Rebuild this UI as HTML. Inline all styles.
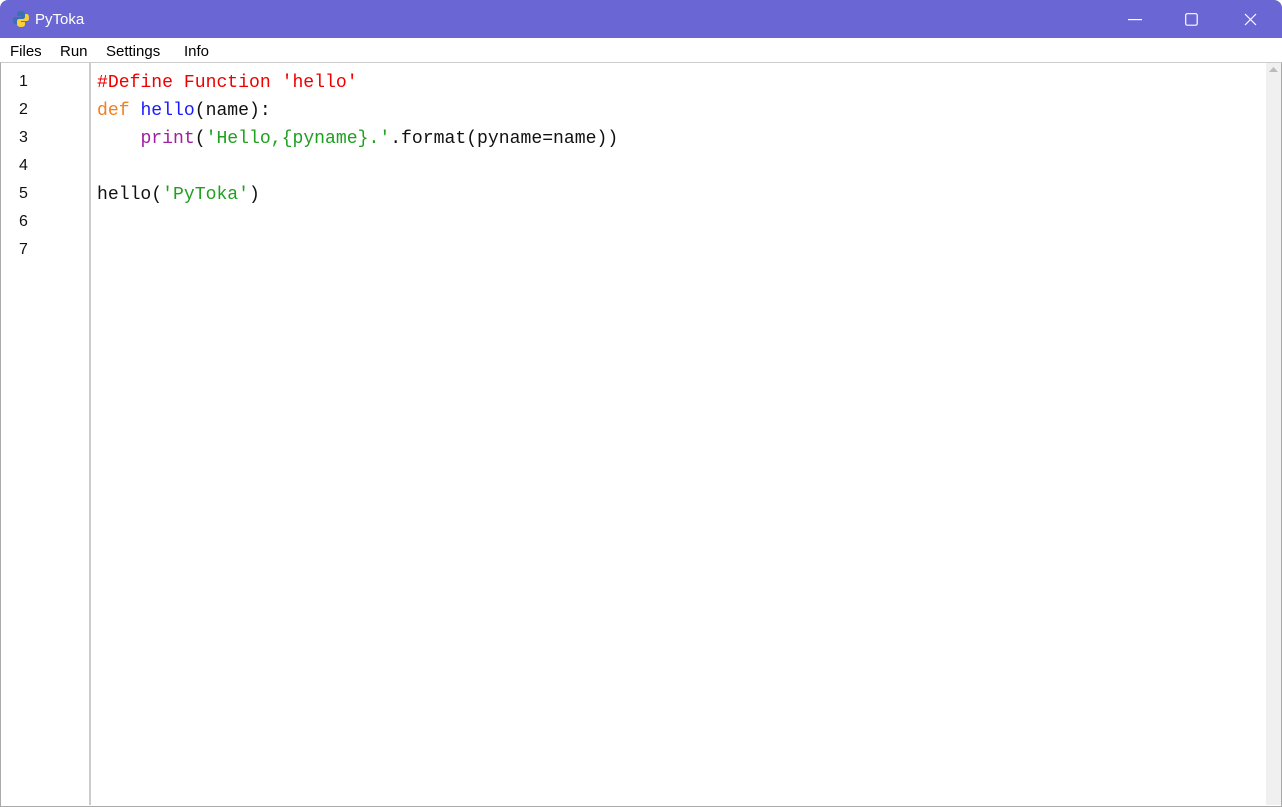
<!DOCTYPE html>
<html><head><style>
body{margin:0;width:1282px;height:806px;overflow:hidden;background:#fff;font-family:"Liberation Sans",sans-serif;position:relative}
.title{position:absolute;left:0;top:0;width:1282px;height:38px;background:#6a67d4;color:#fff;border-radius:8px 8px 0 0}
.title span{position:absolute;left:35px;top:11px;font-size:15px}
.menu{position:absolute;top:38px;left:0;width:1282px;height:25px;background:#fff;font-size:15px}
.menu span{position:absolute;top:5px}
.ed{position:absolute;top:62px;left:0;width:1280px;height:743px;border:1px solid #aaa;border-top:1px solid #ccc}
.gut{position:absolute;left:1px;top:63px;width:88px;height:742px;border-right:2px solid #ccc;background:#fff}
.ln{position:absolute;left:18px;font-size:16px;color:#111}
.code{position:absolute;left:97px;top:69px;font-family:"Liberation Mono",monospace;font-size:18.1px;line-height:28px;white-space:pre;color:#111}
.sb{position:absolute;left:1266px;top:63px;width:15px;height:742px;background:#f0f0f0}
</style></head><body>
<div class="title">
<svg style="position:absolute;left:12px;top:10px" width="18" height="18" viewBox="0 0 18 18"><path d="M9 1C5 1 5 3 5 4v2h4v1H3C1 7 1 9 1 10s0 4 2 4h2v-3c0-1 1-2 2-2h4c1 0 2-1 2-2V4c0-2-2-3-4-3z" fill="#3a72b0"/><path d="M9 17c4 0 4-2 4-3v-2H9v-1h6c2 0 2-2 2-3s0-4-2-4h-2v3c0 1-1 2-2 2H7c-1 0-2 1-2 2v3c0 2 2 3 4 3z" fill="#f6d13a"/></svg>
<span>PyToka</span>
<svg style="position:absolute;left:1128px;top:19px" width="14" height="2"><rect width="14" height="1.2" fill="#fff"/></svg>
<svg style="position:absolute;left:1185px;top:13px" width="13" height="13"><rect x=".7" y=".7" width="11.5" height="11.5" rx="1.5" fill="none" stroke="#fff" stroke-width="1.2"/></svg>
<svg style="position:absolute;left:1244px;top:13px" width="13" height="13"><path d="M1 1L12 12M12 1L1 12" stroke="#fff" stroke-width="1.2"/></svg>
</div>
<div class="menu"><span style="left:10px">Files</span><span style="left:60px">Run</span><span style="left:106px">Settings</span><span style="left:184px">Info</span></div>
<div class="ed"></div>
<div class="gut">
<div class="ln" style="top:10px">1</div><div class="ln" style="top:38px">2</div><div class="ln" style="top:66px">3</div><div class="ln" style="top:94px">4</div><div class="ln" style="top:122px">5</div><div class="ln" style="top:150px">6</div><div class="ln" style="top:178px">7</div>
</div>
<div class="code"><span style="color:#e00">#Define Function 'hello'</span>
<span style="color:#f08020">def</span> <span style="color:#1a1aff">hello</span>(name):
    <span style="color:#a020a0">print</span>(<span style="color:#1fa01f">'Hello,{pyname}.'</span>.format(pyname=name))

hello(<span style="color:#1fa01f">'PyToka'</span>)
</div>
<div class="sb"><svg style="position:absolute;left:3px;top:4px" width="9" height="6"><path d="M0 5L4.5 0L9 5z" fill="#bbb"/></svg></div>
</body></html>
